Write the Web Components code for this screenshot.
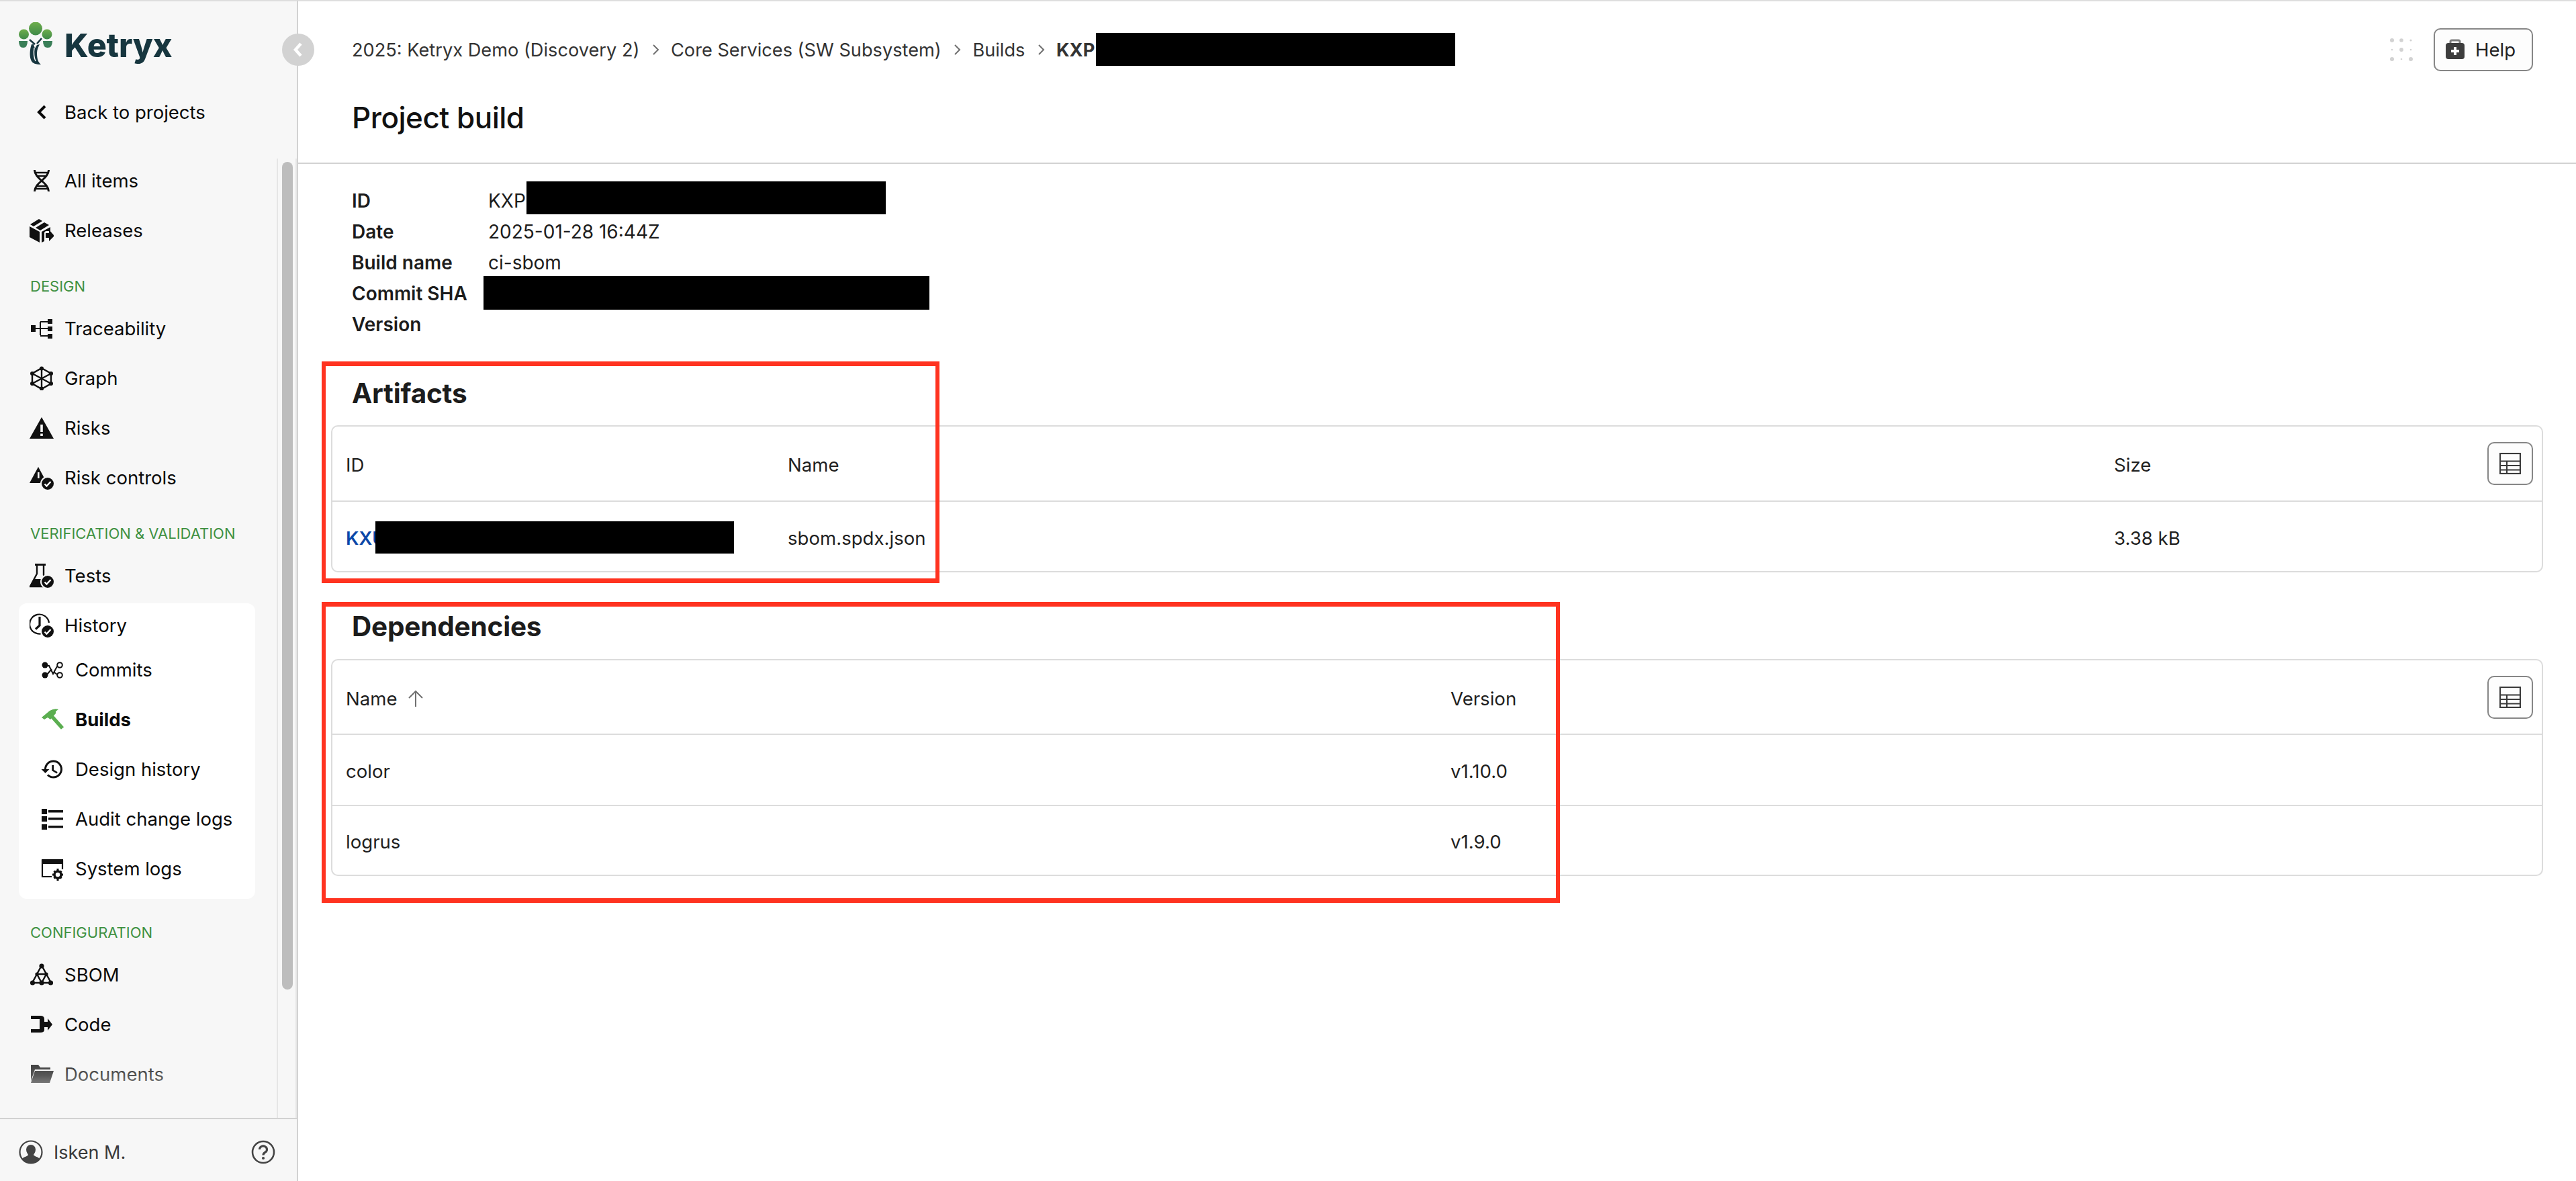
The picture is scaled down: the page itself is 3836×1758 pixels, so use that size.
<!DOCTYPE html>
<html lang="en">
<head>
<meta charset="utf-8">
<title>Project build</title>
<style>
html, body { margin: 0; padding: 0; background: #fff; }
body { font-family: Inter, "Liberation Sans", sans-serif; font-size: 28px; color: #1c1c1c; }
</style>
</head>
<body>
<app-shell>
  <side-bar>
    <nav-section>
      <nav-item icon="dna">All items</nav-item>
      <nav-item icon="releases">Releases</nav-item>
    </nav-section>
    <nav-section label="DESIGN">
      <nav-item icon="trace">Traceability</nav-item>
      <nav-item icon="graph">Graph</nav-item>
      <nav-item icon="risk">Risks</nav-item>
      <nav-item icon="riskcontrol">Risk controls</nav-item>
    </nav-section>
    <nav-section label="VERIFICATION &amp; VALIDATION">
      <nav-item icon="tests">Tests</nav-item>
      <nav-panel>
        <nav-item icon="history">History</nav-item>
        <nav-item sub icon="commits">Commits</nav-item>
        <nav-item sub active icon="hammer">Builds</nav-item>
        <nav-item sub icon="designhistory">Design history</nav-item>
        <nav-item sub icon="list">Audit change logs</nav-item>
        <nav-item sub icon="syslogs">System logs</nav-item>
      </nav-panel>
    </nav-section>
    <nav-section label="CONFIGURATION">
      <nav-item icon="sbom">SBOM</nav-item>
      <nav-item icon="code">Code</nav-item>
      <nav-item icon="folder">Documents</nav-item>
    </nav-section>
  </side-bar>

  <main-pane>
    <page-header slot="header">
      <bread-crumbs slot="crumbs">
        <span>2025: Ketryx Demo (Discovery 2)</span>
        <span>Core Services (SW Subsystem)</span>
        <span>Builds</span>
        <b>KXP</b>
      </bread-crumbs>
      <span slot="title">Project build</span>
    </page-header>

    <detail-list>
      <span slot="label">ID</span><span slot="value">KXP</span>
      <span slot="label">Date</span><span slot="value">2025-01-28 16:44Z</span>
      <span slot="label">Build name</span><span slot="value">ci-sbom</span>
      <span slot="label">Commit SHA</span><span slot="value">&nbsp;</span>
      <span slot="label">Version</span><span slot="value">&nbsp;</span>
    </detail-list>

    <table-section heading="Artifacts" style="--gap-top:55px;--gap-bottom:22px">
      <data-table style="--cols:658px 1975px 1fr auto">
        <table-row style="--h:110px">
          <table-cell>ID</table-cell><table-cell>Name</table-cell><table-cell>Size</table-cell><column-button></column-button>
        </table-row>
        <table-row style="--h:103px" last>
          <table-cell link>KXU</table-cell><table-cell>sbom.spdx.json</table-cell><table-cell>3.38 kB</table-cell>
        </table-row>
      </data-table>
    </table-section>

    <table-section heading="Dependencies" style="--gap-top:56px;--gap-bottom:23px">
      <data-table style="--cols:1645px 1fr auto">
        <table-row style="--h:109px">
          <table-cell sorted>Name</table-cell><table-cell>Version</table-cell><column-button></column-button>
        </table-row>
        <table-row style="--h:104px">
          <table-cell>color</table-cell><table-cell>v1.10.0</table-cell>
        </table-row>
        <table-row style="--h:102px" last>
          <table-cell>logrus</table-cell><table-cell>v1.9.0</table-cell>
        </table-row>
      </data-table>
    </table-section>
  </main-pane>

  <!-- stuff painted over the screenshot: redaction bars and the two red callouts -->
  <collapse-toggle></collapse-toggle>
  <redact-bar style="--x:1632px;--y:49px;--w:535px;--h:49px"></redact-bar>
  <redact-bar style="--x:784px;--y:270px;--w:535px;--h:49px"></redact-bar>
  <redact-bar style="--x:720px;--y:411px;--w:664px;--h:50px"></redact-bar>
  <redact-bar style="--x:559px;--y:776px;--w:534px;--h:48px"></redact-bar>
  <call-out style="--x:479px;--y:538px;--w:920px;--h:330px"></call-out>
  <call-out style="--x:479px;--y:896px;--w:1844px;--h:448px"></call-out>
</app-shell>

<script>
const BG = "#f7f7f7";
const BADGE = `<circle cx="27" cy="27" r="11" fill="var(--item-bg, ${BG})"/><circle cx="27" cy="27" r="9" fill="#111"/><path d="M22.5 27.5l3 3 6-6.5" fill="none" stroke="#fff" stroke-width="2.4"/>`;

const ICONS = {
  dna: `<g fill="none" stroke="#111" stroke-width="3"><path d="M7.500 2c0 13 21 19 21 32M28.500 2C28.500 15 7.500 21 7.500 34"/><path d="M8 6h20M11 11h14M11 26h14M8 30h20" stroke-width="2.6"/></g>`,
  releases: `<path fill="#111" d="M1 9 14 1l5 3L6 12zM9 14l13-8 7 4-13 8zM0 12l15 8v16L0 28zM18 20l13-7v6h-7l-2 2v13l-4 2z"/><path fill="#111" d="M24 22h5v-5l8 9-8 8v-5h-5z"/>`,
  trace: `<path fill="#111" d="M2 13h7v10H2zM27 4h7v7h-7zM27 15h7v7h-7zM27 26h7v7h-7z"/><path fill="none" stroke="#111" stroke-width="2" d="M9 18h18M16 8v20M16 8h11M16 29h11"/>`,
  graph: `<g fill="none" stroke="#111" stroke-width="2.4"><path d="M18 3l14 8v15l-14 8-14-8V11zM18 3v31M4 11l28 15M32 11 4 26"/></g><g fill="#111"><circle cx="18" cy="3.5" r="3"/><circle cx="32" cy="11" r="3"/><circle cx="32" cy="26" r="3"/><circle cx="18" cy="33.5" r="3"/><circle cx="4" cy="26" r="3"/><circle cx="4" cy="11" r="3"/></g>`,
  risk: `<path fill="#111" d="M18 2 36 34H0z"/><path fill="#f7f7f7" d="M16.2 13h3.6v11h-3.6zM16.2 26.500h3.600v3.600h-3.600z"/>`,
  riskcontrol: `<path fill="#111" d="M13 2 26 26H0z"/><path fill="#f7f7f7" d="M12 10h2.600v9H12z"/>${BADGE}`,
  tests: `<path fill="#111" d="M8 0h16v3H8z"/><path fill="none" stroke="#111" stroke-width="2.4" d="M11 3v12L1 34h20M21 3v14l3 6"/><path fill="#111" d="M6.500 23H19l3 12H3q-3 0-2-3z"/>${BADGE}`,
  history: `<path fill="none" stroke="#111" stroke-width="2.2" d="M20 29.500A14.500 14.500 0 1 1 29 14"/><path fill="none" stroke="#111" stroke-width="3.2" d="M15 5v13l-6 5.500"/>${BADGE}`,
  commits: `<g fill="#111"><circle cx="7" cy="11" r="4.500"/><circle cx="7" cy="26" r="4.500"/></g><g fill="none" stroke="#111" stroke-width="2"><circle cx="29" cy="11" r="3.800"/><circle cx="29" cy="26" r="3.800"/><path d="M10 12h3l6 12 6-11M10 25l7-8M21 22l4 3"/></g>`,
  hammer: `<path fill="#5bae50" d="M2 15 14 5q7-4 13-2l-4 3v3l-8 9-4-3-5 3z"/><path fill="none" stroke="#5bae50" stroke-width="5.500" d="M16 12l17 19"/>`,
  designhistory: `<svg x="0" y="0" width="36" height="36" viewBox="0 0 24 24"><path fill="#111" d="M13 3c-4.970 0-9 4.030-9 9H1l3.890 3.890.07.140L9 12H6c0-3.870 3.130-7 7-7s7 3.130 7 7-3.130 7-7 7c-1.930 0-3.680-.790-4.940-2.060l-1.420 1.420C8.270 19.990 10.510 21 13 21c4.970 0 9-4.030 9-9s-4.030-9-9-9zm-1.500 5v5.500l4.800 2.900.9-1.500-3.800-2.200V8h-1.900z"/></svg>`,
  list: `<path fill="#111" d="M2 3h8v8H2zM2 14h8v8H2zM2 26h8v8H2zM12 5h22v3.500H12zM12 16h22v3.500H12zM12 28h22v3.500H12z"/>`,
  syslogs: `<path fill="#111" d="M2 4h32v7H2z"/><path fill="none" stroke="#111" stroke-width="2.200" d="M3 5v25h14M33 5v14"/><circle cx="26" cy="27" r="5" fill="none" stroke="#111" stroke-width="3.500"/><path fill="none" stroke="#111" stroke-width="3" d="M26 18v3M26 33v3M18 27h3M31 27h3M20.500 21.500l2 2M29.500 30.500l2 2M20.500 32.500l2-2M29.500 23.500l2-2"/>`,
  sbom: `<g fill="none" stroke="#111" stroke-width="2.400"><path d="M18 4 4 30h28zM11 17h14M11 17l7 13 7-13"/></g><g fill="#111"><circle cx="18" cy="5" r="3.600"/><circle cx="4.500" cy="30" r="3.600"/><circle cx="18" cy="30" r="3.600"/><circle cx="31.500" cy="30" r="3.600"/><circle cx="11" cy="17" r="2.600"/><circle cx="25" cy="17" r="2.600"/></g>`,
  code: `<path fill="#111" d="M2 5h14q6 0 6 5v4h5V9l7 9-7 9v-5h-5v4q0 4-6 4H2v-5h13V10H2z"/>`,
  folder: `<path fill="#111" d="M2 4h11l3 4h15v3H8L2 28z"/><path fill="#111" d="M8 13h28l-6 18H2z"/>`,
  avatar: `<circle cx="18" cy="18" r="16.500" fill="none" stroke="#444" stroke-width="2.200"/><path fill="#444" d="M18 7a7 7 0 0 1 7 7c0 4-2 6-3 8 0 2 7 3 9 6a16 16 0 0 1-26 0c2-3 9-4 9-6-1-2-3-4-3-8a7 7 0 0 1 7-7z"/>`,
  help: `<circle cx="18" cy="18" r="16" fill="none" stroke="#444" stroke-width="2.600"/><path fill="none" stroke="#444" stroke-width="3.200" d="M12.500 14a5.500 5 0 1 1 8.500 4.200c-2 1.300-3 2.300-3 4.300"/><circle cx="18" cy="27" r="2.100" fill="#444"/>`,
};

const iconSvg = (name, size = 36) =>
  `<svg xmlns="http://www.w3.org/2000/svg" width="${size}" height="${size}" viewBox="0 0 36 36">${ICONS[name]}</svg>`;

function shadow(el, html) {
  el.attachShadow({ mode: "open" });
  el.shadowRoot.innerHTML = html;
}

class AppShell extends HTMLElement {
  constructor() {
    super();
    shadow(this, `<style>
      :host { display: flex; position: relative; height: 100vh; min-height: 1758px; overflow: hidden; background: #fff; }
    </style><slot></slot>`);
  }
}

class SideBar extends HTMLElement {
  constructor() {
    super();
    shadow(this, `<style>
      :host { display: flex; flex-direction: column; flex: none; box-sizing: border-box; width: 444px; height: 1758px;
        background: ${BG}; border-top: 2px solid #dedede; border-right: 2px solid #d2d2d2; color: #0a0a0a; font-size: 27.5px; }
      .logo { display: flex; align-items: center; gap: 19px; height: 126px; padding-left: 28px; box-sizing: border-box; flex: none; }
      .word { font-size: 48.5px; font-weight: 800; color: #17363f; letter-spacing: -0.2px; line-height: 1; margin-top: 6px; margin-left: -1px; }
      .back { display: flex; align-items: center; gap: 16px; height: 66px; margin-top: 6px; padding-left: 44px; flex: none; }
      .back svg { flex: none; }
      .scroll { display: flex; height: 1428px; flex: none; margin-top: 36px; }
      .list { position: relative; width: 412px; box-sizing: border-box; padding: 0 32px 0 28px; overflow: hidden; }
      .fade { position: absolute; left: 0; right: 0; bottom: 0; height: 115px;
        background: linear-gradient(to bottom, rgba(247,247,247,0), rgba(247,247,247,.3) 45%, ${BG} 92%); }
      .track { width: 30px; box-sizing: border-box; border-left: 2px solid #e6e6e6; border-right: 2px solid #e6e6e6; flex: none; }
      .thumb { width: 16px; height: 1232px; margin: 5px 0 0 6px; background: #bdbdbd; border-radius: 8px; }
      .foot { display: flex; align-items: center; height: 94px; box-sizing: border-box; border-top: 2px solid #d2d2d2;
        padding: 6px 0 0 28px; flex: none; color: #3a3a3a; font-size: 27px; }
      .foot .name { margin-left: 16px; flex: 1; }
      .foot .q { margin-right: 32px; display: flex; }
    </style>
    <div class="logo">
      <svg width="50" height="64" viewBox="0 0 50 64">
        <defs><linearGradient id="g" x1="0" y1="0" x2="0" y2="1"><stop offset="0" stop-color="#6fae4c"/><stop offset="1" stop-color="#3f8a48"/></linearGradient></defs>
        <circle cx="25" cy="9.500" r="10" fill="url(#g)"/>
        <circle cx="7.500" cy="18" r="7.500" fill="url(#g)"/>
        <circle cx="42" cy="18" r="7.500" fill="url(#g)"/>
        <path fill="#3a7f58" d="M0 28h13q0 10-6.500 10T0 28zM36 28h14q0 10-7 10t-7-10z"/>
        <path fill="#17363f" d="M19 33c-3 8-3 18-1 23 2 6 8 7 15 7-4-3-6-8-6-17 0-5 2-9 4-13l-4 1-3 5-2-6z"/>
        <path fill="none" stroke="#f7f7f7" stroke-width="1.500" d="M23 38c-1 7-1 14 2 20"/>
        <path fill="none" stroke="#17363f" stroke-width="2.600" d="M16 26l8 7M34 24l-7 8"/>
      </svg>
      <span class="word">Ketryx</span>
    </div>
    <div class="back">
      <svg width="36" height="36" viewBox="0 0 36 36"><path d="M23 9l-9 9 9 9" fill="none" stroke="#0a0a0a" stroke-width="4"/></svg>
      <span>Back to projects</span>
    </div>
    <div class="scroll">
      <div class="list"><slot></slot><div class="fade"></div></div>
      <div class="track"><div class="thumb"></div></div>
    </div>
    <div class="foot">
      ${iconSvg("avatar")}
      <span class="name">Isken M.</span>
      <span class="q">${iconSvg("help")}</span>
    </div>`);
  }
}

class NavSection extends HTMLElement {
  constructor() {
    super();
    const label = this.getAttribute("label");
    shadow(this, `<style>
      :host { display: block; }
      .label { height: 30px; line-height: 30px; margin: 35px 0 15px 17px; font-size: 22px; color: #3f9142; white-space: nowrap; }
      .items { display: flex; flex-direction: column; gap: 8px; }
    </style>
    ${label ? `<div class="label"></div>` : ""}
    <div class="items"><slot></slot></div>`);
    if (label) this.shadowRoot.querySelector(".label").textContent = label;
  }
}

class NavPanel extends HTMLElement {
  constructor() {
    super();
    shadow(this, `<style>
      :host { display: flex; flex-direction: column; gap: 8px; background: #fff; border-radius: 12px; padding-bottom: 12px; --item-bg: #fff; }
      ::slotted(nav-item:first-child) { margin-bottom: -8px; }
    </style><slot></slot>`);
  }
}

class NavItem extends HTMLElement {
  constructor() {
    super();
    shadow(this, `<style>
      :host { display: flex; align-items: center; gap: 16px; height: 66px; padding-left: 16px; white-space: nowrap; }
      :host([sub]) { padding-left: 32px; }
      :host([active]) { font-weight: 700; }
      .icon { display: flex; flex: none; width: 36px; height: 36px; }
    </style><span class="icon">${iconSvg(this.getAttribute("icon"))}</span><span><slot></slot></span>`);
  }
}

class MainPane extends HTMLElement {
  constructor() {
    super();
    shadow(this, `<style>
      :host { display: block; flex: 1; min-width: 0; box-sizing: border-box; border-top: 2px solid #dedede; background: #fff; }
      .body { padding: 32px 49px 0; }
    </style><slot name="header"></slot><div class="body"><slot></slot></div>`);
  }
}

class PageHeader extends HTMLElement {
  constructor() {
    super();
    shadow(this, `<style>
      :host { display: block; box-sizing: border-box; height: 242px; border-bottom: 2px solid #d2d2d2; padding: 40px 64px 0 80px; }
      .top { display: flex; align-items: center; height: 64px; }
      .crumbs { flex: 1; }
      .dots { margin-right: 27px; display: flex; }
      button { display: flex; align-items: center; gap: 16px; box-sizing: border-box; width: 148px; height: 64px; padding: 0 0 0 16px;
        background: #fdfdfd; border: 2px solid #868686; border-radius: 10px; font: inherit; font-size: 27.5px; color: #222; }
      .title { height: 60px; line-height: 60px; margin-top: 39px; font-size: 44px; font-weight: 500; color: #111; letter-spacing: -0.5px; }
    </style>
    <div class="top">
      <div class="crumbs"><slot name="crumbs"></slot></div>
      <span class="dots"><svg width="42" height="42" viewBox="0 0 42 42" fill="#d2d2d2">
        <circle cx="7" cy="7" r="3"/><circle cx="21" cy="7" r="2.800"/><circle cx="35" cy="7" r="1.600"/>
        <circle cx="7" cy="21" r="1.300"/><circle cx="21" cy="21" r="2.900"/><circle cx="35" cy="21" r="1.300"/>
        <circle cx="7" cy="35" r="3"/><circle cx="21" cy="35" r="1.300"/><circle cx="35" cy="35" r="3"/>
      </svg></span>
      <button>
        <svg width="28" height="32" viewBox="0 0 28 32"><path d="M7 7V4q0-2 2-2h10q2 0 2 2v3" fill="none" stroke="#7d7d7d" stroke-width="3"/><rect x="0" y="6" width="28" height="24" rx="4" fill="#3d3d3d"/><path d="M12 12h4v4h4v4h-4v4h-4v-4H8v-4h4z" fill="#fff"/></svg>
        <span>Help</span>
      </button>
    </div>
    <div class="title"><slot name="title"></slot></div>`);
  }
}

class BreadCrumbs extends HTMLElement {
  constructor() {
    super();
    shadow(this, `<style>
      :host { display: block; color: #333; white-space: nowrap; font-size: 27.2px; }
      .row { display: flex; align-items: center; }
      svg { margin: 0 14.3px; flex: none; }
    </style><div class="row"></div>`);
    this._sep = `<svg width="18" height="22" viewBox="0 0 18 22"><path d="M6 4l7 7-7 7" fill="none" stroke="#707070" stroke-width="2"/></svg>`;
  }
  connectedCallback() {
    // the children are parsed after the constructor when the element is upgraded late, so build here
    const row = this.shadowRoot.querySelector(".row");
    [...this.children].forEach((c, i) => {
      c.slot = "c" + i;
      if (i) row.insertAdjacentHTML("beforeend", this._sep);
      row.insertAdjacentHTML("beforeend", `<slot name="c${i}"></slot>`);
    });
  }
}

class DetailList extends HTMLElement {
  constructor() {
    super();
    shadow(this, `<style>
      :host { display: flex; padding-left: 31px; }
      .col { display: grid; grid-auto-rows: 46px; align-items: center; }
      .labels { width: 203px; font-weight: 600; color: #1c1c1c; }
    </style>
    <div class="col labels"><slot name="label"></slot></div>
    <div class="col"><slot name="value"></slot></div>`);
  }
}

class TableSection extends HTMLElement {
  constructor() {
    super();
    shadow(this, `<style>
      :host { display: block; }
      h2 { margin: var(--gap-top) 0 var(--gap-bottom) 31px; height: 50px; line-height: 50px; font-size: 40.5px; font-weight: 700; color: #1c1c1c; letter-spacing: -0.2px; }
    </style><h2></h2><slot></slot>`);
    this.shadowRoot.querySelector("h2").textContent = this.getAttribute("heading");
  }
}

class DataTable extends HTMLElement {
  constructor() {
    super();
    shadow(this, `<style>
      :host { display: block; border: 2px solid #dcdcdc; border-radius: 10px; background: #fff; }
    </style><slot></slot>`);
  }
}

class TableRow extends HTMLElement {
  constructor() {
    super();
    shadow(this, `<style>
      :host { display: grid; grid-template-columns: var(--cols); align-items: center; box-sizing: content-box;
        height: var(--h); padding: 0 13px 0 20px; border-bottom: 2px solid #dcdcdc; }
      :host([last]) { border-bottom: none; }
    </style><slot></slot>`);
  }
}

class TableCell extends HTMLElement {
  constructor() {
    super();
    const sorted = this.hasAttribute("sorted");
    shadow(this, `<style>
      :host { display: flex; align-items: center; gap: 15px; padding-top: 4px; color: #1f1f1f; white-space: nowrap; font-size: 27.6px; }
      :host([link]) { color: #0b47a8; font-weight: 600; }
    </style><slot></slot>${sorted ? `<svg width="24" height="26" viewBox="0 0 24 26"><path d="M12 25V2M2 12 12 2l10 10" fill="none" stroke="#707070" stroke-width="2"/></svg>` : ""}`);
  }
}

class ColumnButton extends HTMLElement {
  constructor() {
    super();
    shadow(this, `<style>
      :host { display: flex; align-items: center; justify-content: center; box-sizing: border-box; width: 68px; height: 64px;
        border: 2px solid #868686; border-radius: 10px; background: #fdfdfd; justify-self: end; grid-column: -2; }
    </style>
    <svg width="32" height="32" viewBox="0 0 32 32" fill="none" stroke="#3a3a3a" stroke-width="2.200"><rect x="1" y="1" width="30" height="30"/><path d="M1 12.500h30M1 19h30M1 25.500h30M11 12.500V31"/></svg>`);
  }
}

class CollapseToggle extends HTMLElement {
  constructor() {
    super();
    shadow(this, `<style>
      :host { position: absolute; left: 420px; top: 50px; width: 48px; height: 48px; border-radius: 50%; background: #d2d2d2;
        display: flex; align-items: center; justify-content: center; }
    </style><svg width="20" height="24" viewBox="0 0 20 24"><path d="M14 3l-8 9 8 9" fill="none" stroke="#fff" stroke-width="4.500"/></svg>`);
  }
}

class RedactBar extends HTMLElement {
  constructor() {
    super();
    shadow(this, `<style>
      :host { position: absolute; left: var(--x); top: var(--y); width: var(--w); height: var(--h); background: #000; }
    </style>`);
  }
}

class CallOut extends HTMLElement {
  constructor() {
    super();
    shadow(this, `<style>
      :host { position: absolute; left: var(--x); top: var(--y); width: var(--w); height: var(--h); box-sizing: border-box;
        border: solid #ff3320; border-width: 7px 6px; pointer-events: none; }
    </style>`);
  }
}

customElements.define("app-shell", AppShell);
customElements.define("side-bar", SideBar);
customElements.define("nav-section", NavSection);
customElements.define("nav-panel", NavPanel);
customElements.define("nav-item", NavItem);
customElements.define("main-pane", MainPane);
customElements.define("page-header", PageHeader);
customElements.define("bread-crumbs", BreadCrumbs);
customElements.define("detail-list", DetailList);
customElements.define("table-section", TableSection);
customElements.define("data-table", DataTable);
customElements.define("table-row", TableRow);
customElements.define("table-cell", TableCell);
customElements.define("column-button", ColumnButton);
customElements.define("collapse-toggle", CollapseToggle);
customElements.define("redact-bar", RedactBar);
customElements.define("call-out", CallOut);
</script>
</body>
</html>
